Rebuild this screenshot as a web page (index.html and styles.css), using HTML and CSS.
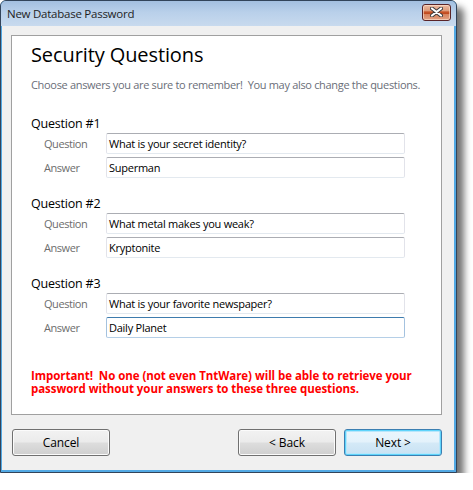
FILE: index.html
```html
<!DOCTYPE html>
<html>
<head>
<meta charset="utf-8">
<title>New Database Password</title>
<link rel="stylesheet" href="styles.css">
</head>
<body>
<div class="window">
  <div class="titlebar">
    <span class="title">New Database Password</span>
    <span class="close">
      <svg width="13" height="10" viewBox="0 0 13 10">
        <path d="M2 1.5 L11 8.5 M11 1.5 L2 8.5" stroke="#3b3b3b" stroke-width="4" stroke-linecap="round" fill="none"/>
        <path d="M2 1.5 L11 8.5 M11 1.5 L2 8.5" stroke="#ffffff" stroke-width="2.2" stroke-linecap="round" fill="none"/>
      </svg>
    </span>
  </div>
  <div class="client">
    <div class="panel">
      <h1 class="heading">Security Questions</h1>
      <p class="sub">Choose answers you are sure to remember!&nbsp; You may also change the questions.</p>

      <div class="qblock">
        <div class="qtitle">Question #1</div>
        <div class="row"><span class="label">Question</span><div class="field">What is your secret identity?</div></div>
        <div class="row"><span class="label">Answer</span><div class="field">Superman</div></div>
      </div>

      <div class="qblock">
        <div class="qtitle">Question #2</div>
        <div class="row"><span class="label">Question</span><div class="field">What metal makes you weak?</div></div>
        <div class="row"><span class="label">Answer</span><div class="field">Kryptonite</div></div>
      </div>

      <div class="qblock">
        <div class="qtitle">Question #3</div>
        <div class="row"><span class="label">Question</span><div class="field">What is your favorite newspaper?</div></div>
        <div class="row"><span class="label">Answer</span><div class="field focused">Daily Planet</div></div>
      </div>

      <p class="important"><span class="line">Important!&nbsp; No one (not even TntWare) will be able to retrieve your</span><span class="line">password without your answers to these three questions.</span></p>
    </div>
    <div class="buttons">
      <span class="btn">Cancel</span>
      <span class="spacer"></span>
      <span class="btn">&lt; Back</span>
      <span class="btn default">Next &gt;</span>
    </div>
  </div>
</div>
</body>
</html>
```

FILE: styles.css
```css
html, body {
  margin: 0;
  padding: 0;
  background: #ffffff;
}

body {
  font-family: "Open Sans", "Noto Sans", sans-serif;
  font-size: 12px;
  color: #000;
}

.window {
  width: 455px;
  height: 471px;
  border: 1px solid #32445a;
  border-radius: 6px 6px 0 0;
  background: #52a9e4;
  box-shadow: 7px 7px 7px rgba(0, 0, 0, 0.55);
  display: flex;
  flex-direction: column;
}

.titlebar {
  height: 25px;
  flex: none;
  display: flex;
  align-items: center;
  justify-content: space-between;
  padding: 0 5px 0 6px;
  border-radius: 5px 5px 0 0;
  background: linear-gradient(#a3bfe0, #b9d0ea 45%, #c8daee);
}

.title {
  font-size: 11.5px;
  letter-spacing: -0.25px;
  color: #1e1e1e;
  margin-top: -1px;
}

.close {
  width: 27px;
  height: 15px;
  border: 1px solid #5a2428;
  border-radius: 3px;
  display: flex;
  align-items: center;
  justify-content: center;
  margin-top: -3px;
  background: linear-gradient(#edbba2 0%, #dc9a78 40%, #c8572c 45%, #c04a1e 58%, #d6835e 62%, #e2a283 100%);
  box-shadow: inset 0 0 0 1px rgba(255, 230, 210, 0.6);
}

.close svg {
  display: block;
}

.client {
  flex: 1;
  margin: 0 2px 2px 1px;
  background: #f0f0f0;
  padding: 9px 12px 0 9px;
  display: flex;
  flex-direction: column;
}

.panel {
  height: 374px;
  border: 1px solid #a0a0a0;
  background: #ffffff;
  padding: 4px 0 0 19px;
}

.heading {
  margin: 0;
  font-size: 20px;
  line-height: 30px;
  font-weight: normal;
  letter-spacing: -0.1px;
}

.sub {
  margin: 7px 0 0 0;
  font-size: 11px;
  line-height: 16px;
  color: #6a6e78;
  letter-spacing: -0.32px;
  white-space: nowrap;
}

.qblock {
  margin-top: 22px;
  display: flex;
  flex-direction: column;
  gap: 3px;
}

.qblock + .qblock {
  margin-top: 17px;
}

.qtitle {
  font-size: 12.5px;
  line-height: 18px;
  letter-spacing: -0.2px;
  margin-bottom: -3px;
}

.row {
  display: flex;
  align-items: center;
  padding-left: 13px;
}

.label {
  width: 62px;
  font-size: 11px;
  color: #6d6d6d;
  letter-spacing: -0.45px;
}

.field {
  width: 295px;
  height: 19px;
  border: 1px solid #e2e3ea;
  border-top-color: #abadb3;
  border-bottom-color: #e3e9ef;
  border-radius: 2px;
  padding: 0 0 0 2px;
  font-size: 11px;
  line-height: 19px;
  letter-spacing: -0.25px;
  white-space: nowrap;
}

.field.focused {
  border-color: #b5cfe7;
  border-top-color: #3d7bad;
  border-left-color: #a4c2df;
  border-right-color: #a4c2df;
}

.important {
  margin: 31px 0 0 0;
  font-size: 11.5px;
  line-height: 14px;
  font-weight: bold;
  color: #ff0000;
  letter-spacing: -0.05px;
  white-space: nowrap;
  display: flex;
  flex-direction: column;
  gap: 0;
}

.line {
  display: block;
  line-height: 13px;
  height: 13px;
  overflow: visible;
}

.buttons {
  margin-top: 14px;
  display: flex;
  gap: 8px;
  padding-left: 1px;
}

.spacer {
  flex: 1;
}

.btn {
  width: 96px;
  height: 25px;
  border: 1px solid #707070;
  border-radius: 3px;
  display: flex;
  align-items: center;
  justify-content: center;
  font-size: 12px;
  letter-spacing: -0.1px;
  color: #000;
  background: linear-gradient(#f2f2f2 0%, #ebebeb 48%, #dddddd 52%, #cfcfcf 100%);
  box-shadow: inset 0 0 0 1px #fbfbfb;
}

.btn.default {
  border-color: #3c7fb1;
  background: linear-gradient(#eaf6fd 0%, #e4f2fb 48%, #d4e9f7 52%, #c8e2f3 100%);
  box-shadow: inset 0 0 0 1px #5fd4fb, inset 0 0 0 2px #b7e6fb;
}
```
